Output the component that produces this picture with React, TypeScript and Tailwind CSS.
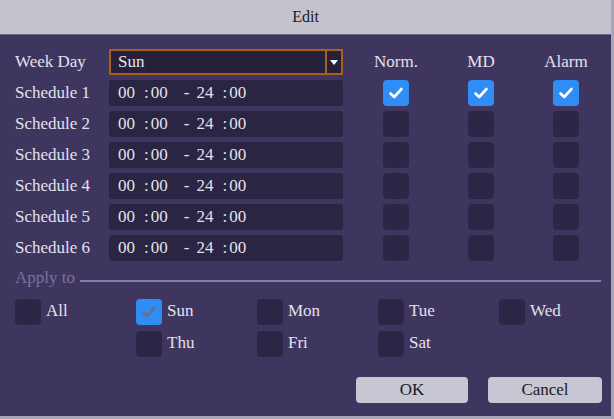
import React from "react";

function Check({ on, dim }: { on?: boolean; dim?: boolean }) {
  return (
    <div
      className={
        "w-[26px] h-[26px] rounded-[4px] flex items-center justify-center shrink-0 " +
        (on ? "bg-[#2f8df5]" : "bg-[#2c2746]")
      }
    >
      {on && (
        <svg width="16" height="14" viewBox="0 0 16 14">
          <path
            d="M2.5 7.5 L6.2 11 L13.5 3"
            fill="none"
            stroke={dim ? "#5f7396" : "#ffffff"}
            strokeWidth="2.6"
            strokeLinecap="round"
            strokeLinejoin="round"
          />
        </svg>
      )}
    </div>
  );
}

function TimeBox() {
  return (
    <div className="w-[234px] h-[26px] shrink-0 rounded-[3px] bg-[#2a2542] flex items-center pl-[9px] text-[17px] text-[#e4e1ec]">
      <span>00</span>
      <span className="ml-[9px]">:</span>
      <span className="ml-[2px]">00</span>
      <span className="ml-[16px]">-</span>
      <span className="ml-[7px]">24</span>
      <span className="ml-[9px]">:</span>
      <span className="ml-[2px]">00</span>
    </div>
  );
}

function ColCell({ children }: { children: React.ReactNode }) {
  return <div className="w-[26px] flex justify-center whitespace-nowrap">{children}</div>;
}

function ApplyItem({ label, on }: { label: string; on?: boolean }) {
  return (
    <div className="w-[121px] shrink-0 flex items-center">
      <Check on={on} dim />
      <span className="ml-[5px] text-[17px] text-[#e4e1ec] -mt-[2px]">{label}</span>
    </div>
  );
}

export default function App() {
  const schedules = [1, 2, 3, 4, 5, 6];
  return (
    <div className="w-[614px] h-[419px] bg-[#a9a6b8] overflow-hidden font-[family-name:'Liberation_Serif','Tinos','DejaVu_Serif',serif]">
      <div className="w-[611px] h-[416px] bg-[#3f3660] flex flex-col">
        <div className="h-[35px] bg-[#c4c2cc] border-b border-[#6e6888] flex items-center justify-center text-[16px] text-[#1c1c1c]">
          Edit
        </div>
        <div className="flex flex-col pl-[15px] pt-[14px]">
          {/* Week day row */}
          <div className="flex items-center h-[26px]">
            <div className="w-[94px] shrink-0 text-[17px] text-[#e4e1ec]">Week Day</div>
            <div className="w-[234px] h-[26px] shrink-0 border-2 border-[#a9601f] bg-[#262139] flex items-center">
              <span className="flex-1 pl-[7px] text-[17px] text-[#e4e1ec]">Sun</span>
              <div className="w-[2px] h-full bg-[#a9601f]" />
              <div className="w-[14px] h-full flex items-center justify-center">
                <svg width="8" height="5" viewBox="0 0 8 5">
                  <path d="M0 0 L8 0 L4 5 Z" fill="#ffffff" />
                </svg>
              </div>
            </div>
            <div className="ml-[40px]">
              <ColCell>
                <span className="text-[17px] text-[#e4e1ec]">Norm.</span>
              </ColCell>
            </div>
            <div className="ml-[59px]">
              <ColCell>
                <span className="text-[17px] text-[#e4e1ec]">MD</span>
              </ColCell>
            </div>
            <div className="ml-[59px]">
              <ColCell>
                <span className="text-[17px] text-[#e4e1ec]">Alarm</span>
              </ColCell>
            </div>
          </div>
          {/* schedule rows */}
          <div className="flex flex-col gap-[5px] mt-[5px]">
            {schedules.map((n) => (
              <div key={n} className="flex items-center h-[26px]">
                <div className="w-[94px] shrink-0 text-[17px] text-[#e4e1ec]">Schedule {n}</div>
                <TimeBox />
                <div className="ml-[40px]">
                  <Check on={n === 1} />
                </div>
                <div className="ml-[59px]">
                  <Check on={n === 1} />
                </div>
                <div className="ml-[59px]">
                  <Check on={n === 1} />
                </div>
              </div>
            ))}
          </div>
          {/* Apply to */}
          <div className="flex items-center mt-[5px] h-[24px] pr-[10px]">
            <span className="text-[17px] text-[#7a729c]">Apply to</span>
            <div className="flex-1 h-[2px] bg-[#857eaa] ml-[5px] mt-[6px]" />
          </div>
          <div className="flex flex-col gap-[6px] mt-[9px]">
            <div className="flex">
              <ApplyItem label="All" />
              <ApplyItem label="Sun" on />
              <ApplyItem label="Mon" />
              <ApplyItem label="Tue" />
              <ApplyItem label="Wed" />
            </div>
            <div className="flex pl-[121px]">
              <ApplyItem label="Thu" />
              <ApplyItem label="Fri" />
              <ApplyItem label="Sat" />
            </div>
          </div>
          <div className="flex justify-end gap-[20px] pr-[9px] mt-[20px]">
            <button className="w-[112px] h-[26px] rounded-[4px] bg-[#c8c6d2] text-[17px] text-[#1a1a1a] flex items-center justify-center">
              OK
            </button>
            <button className="w-[114px] h-[26px] rounded-[4px] bg-[#c8c6d2] text-[17px] text-[#1a1a1a] flex items-center justify-center">
              Cancel
            </button>
          </div>
        </div>
      </div>
    </div>
  );
}
